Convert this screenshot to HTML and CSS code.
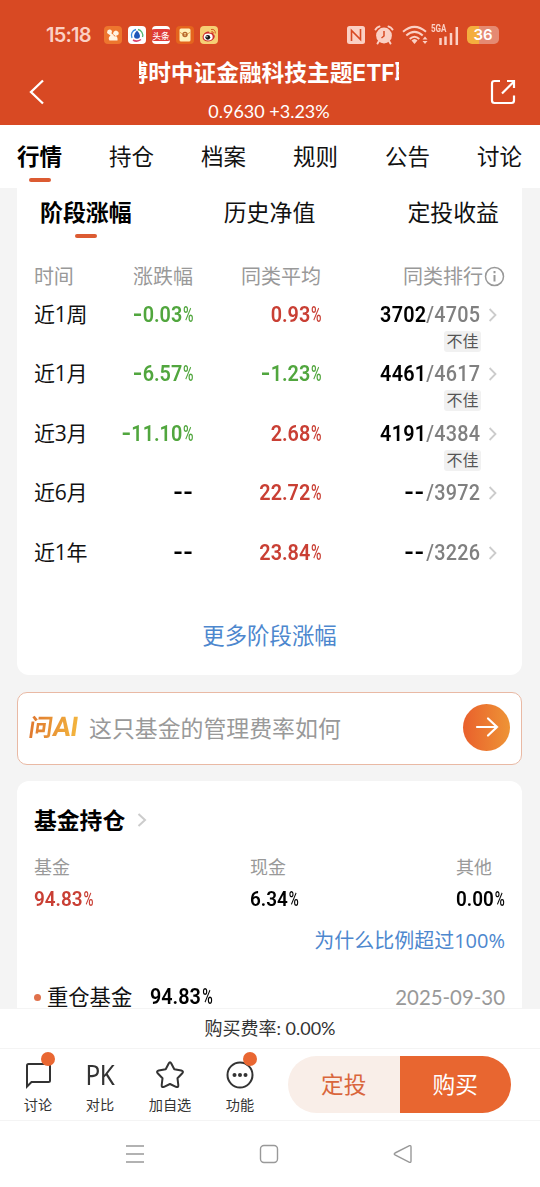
FILE: index.html
```html
<!DOCTYPE html>
<html lang="zh-CN">
<head>
<meta charset="utf-8">
<title>基金详情</title>
<link rel="stylesheet" href="styles.css">
</head>
<body>
<div class="screen">
  <header class="header">
    <div class="status">
      <span class="clock">15:18</span>
      <div class="apps">
        <svg width="18" height="18" viewBox="0 0 18 18"><rect width="18" height="18" rx="4" fill="#ed762e"/><path d="M3.500 4.500Q6 2.500 8 5l-.5 2.500L9 8.500Q9 5 12 4.500q3.500 1 2.500 4-1.500 1.500-3 1 2.500 1.500 2 5H5.500Q3.500 12 6.500 9.500L3 7z" fill="#fff3e3"/><path d="M9.500 8.500l1.500 2" stroke="#ed762e"/></svg>
        <svg width="18" height="18" viewBox="0 0 18 18"><rect width="18" height="18" rx="4" fill="#fff"/><path d="M4 12A6 6 0 0 1 8 3.500" fill="none" stroke="#378be0" stroke-width="1.300"/><path d="M10 3.500A6 6 0 0 1 14.500 11" fill="none" stroke="#52b56d" stroke-width="1.300"/><path d="M5 14q4 2.500 8-.5" fill="none" stroke="#dc4269" stroke-width="1.500"/><path d="M9 4.500q3 3 3 5.200a3 3 0 0 1-6 0Q6 7.500 9 4.500" fill="#1e57b9"/></svg>
        <span class="toutiao">头条</span>
        <svg width="18" height="18" viewBox="0 0 18 18"><rect width="18" height="18" rx="4" fill="#e4641d"/><rect x="3.500" y="2.500" width="11" height="13" rx="1.500" fill="#fff0b9"/><path d="M3.500 6q5.500 5 11 0" fill="none" stroke="#e4aa57"/><circle cx="9" cy="8.500" r="2.700" fill="#b5652b"/><path d="M7.800 7.600h2.400M9 7.600v2.500" stroke="#ffe6a0" stroke-width=".8"/></svg>
        <svg width="18" height="18" viewBox="0 0 18 18"><rect width="18" height="18" rx="4" fill="#f6cf74"/><path d="M2.500 10.500Q4 6 8 5.500q2-.2 1.500 1.500 4-1.500 3.500 1 3 1.500 1 4.500-2 3-6.500 3-5-.5-5-5" fill="#cf302d"/><ellipse cx="8.200" cy="11" rx="4.500" ry="3.400" fill="#fff"/><circle cx="7.800" cy="11.300" r="2.400" fill="#161616"/><circle cx="7" cy="10.700" r=".7" fill="#fff"/><path d="M11 3.500q4.500-.8 4.300 4M11.500 5.500q2 0 2 2" fill="none" stroke="#d85a24"/></svg>
      </div>
      <div class="signals">
        <svg class="nfc" width="18" height="18" viewBox="0 0 18 18"><rect width="18" height="18" rx="2.500" fill="#fbd0c4"/><path d="M4.500 15V4.500L13.500 13.500V3" fill="none" stroke="#d84923" stroke-width="1.600"/></svg>
        <svg class="alarm" width="20" height="20" viewBox="0 0 20 20"><circle cx="10" cy="10.500" r="7.900" fill="#fbd0c4"/><path d="M1.500 4.500Q3 2 5.500 1.500M18.500 4.500Q17 2 14.500 1.500M5 16l-1.500 2.500M15 16l1.500 2.500" stroke="#fbd0c4" stroke-width="2" fill="none" stroke-linecap="round"/><path d="M10 6v5L7.500 13" fill="none" stroke="#d84923" stroke-width="1.500"/></svg>
        <svg class="wifi" width="27" height="20" viewBox="0 0 27 20"><g fill="none" stroke="#fbd0c4" stroke-width="2"><path d="M1 6.800Q12.500-3 24 6.800"/><path d="M4.300 10.500Q12.500 3.200 20.700 10.500"/><path d="M7.700 14Q12.500 9.500 17.300 14"/></g><path d="M9.500 15.500q3-3 6 0L12.500 19z" fill="#fbd0c4"/><path d="M20.500 14.500l2.500-3 2.500 3zM20.500 16l2.500 3 2.500-3z" fill="#fbd0c4"/></svg>
        <div class="cell"><svg width="25" height="19" viewBox="0 0 25 19"><path d="M6.500 12v7M11.500 10.500v8.500M17 7v12M22.800 1v18" stroke="#fbd0c4" stroke-width="2.500"/></svg><span class="net">5GA</span></div>
        <div class="battery"><span>36</span></div>
      </div>
    </div>
    <div class="titlebar">
      <svg class="back" width="16" height="26" viewBox="0 0 16 26"><path d="M14 1.500L2 13l12 11.500" fill="none" stroke="#fff" stroke-width="2.300"/></svg>
      <div class="heading">
        <div class="title"><span>博时中证金融科技主题ETF联接</span></div>
        <div class="quote">0.9630 +3.23%</div>
      </div>
      <svg class="share" width="26" height="26" viewBox="0 0 26 26"><path d="M10 2H4.500Q2 2 2 4.500v17Q2 24 4.500 24H21.500Q24 24 24 21.500V16.500M12 14.500L24 2.500M17 2h7v7" fill="none" stroke="#fff" stroke-width="2.200"/></svg>
    </div>
  </header>

  <nav class="tabs">
    <span class="active">行情</span><span>持仓</span><span>档案</span><span>规则</span><span>公告</span><span>讨论</span>
  </nav>

  <main class="content">
    <section class="card stage">
      <div class="subtabs"><span class="active">阶段涨幅</span><span>历史净值</span><span>定投收益</span></div>
      <div class="row head">
        <span>时间</span><span>涨跌幅</span><span>同类平均</span>
        <span class="rank">同类排行<svg width="21" height="21" viewBox="0 0 21 21"><circle cx="10.500" cy="10.500" r="9" fill="none" stroke="#999" stroke-width="1.500"/><path d="M10.500 9v6.500M10.500 5v2.200" stroke="#999" stroke-width="2"/></svg></span>
      </div>
      <div class="row"><span>近1周</span><span class="num down"><i class="dash">-</i>0.03<i class="pct">%</i></span><span class="num up">0.93<i class="pct">%</i></span><span class="rank num">3702<em>/4705</em><svg class="chev" viewBox="0 0 10 14"><path d="M1.500 1l6.500 6-6.500 6"/></svg></span><span class="badge">不佳</span></div>
      <div class="row"><span>近1月</span><span class="num down"><i class="dash">-</i>6.57<i class="pct">%</i></span><span class="num down"><i class="dash">-</i>1.23<i class="pct">%</i></span><span class="rank num">4461<em>/4617</em><svg class="chev" viewBox="0 0 10 14"><path d="M1.500 1l6.500 6-6.500 6"/></svg></span><span class="badge">不佳</span></div>
      <div class="row"><span>近3月</span><span class="num down"><i class="dash">-</i>11.10<i class="pct">%</i></span><span class="num up">2.68<i class="pct">%</i></span><span class="rank num">4191<em>/4384</em><svg class="chev" viewBox="0 0 10 14"><path d="M1.500 1l6.500 6-6.500 6"/></svg></span><span class="badge">不佳</span></div>
      <div class="row"><span>近6月</span><span class="num"><i class="dash">--</i></span><span class="num up">22.72<i class="pct">%</i></span><span class="rank num"><i class="dash">--</i><em>/3972</em><svg class="chev" viewBox="0 0 10 14"><path d="M1.500 1l6.500 6-6.500 6"/></svg></span></div>
      <div class="row"><span>近1年</span><span class="num"><i class="dash">--</i></span><span class="num up">23.84<i class="pct">%</i></span><span class="rank num"><i class="dash">--</i><em>/3226</em><svg class="chev" viewBox="0 0 10 14"><path d="M1.500 1l6.500 6-6.500 6"/></svg></span></div>
      <div class="more">更多阶段涨幅</div>
    </section>

    <section class="ask">
      <span class="ask-logo">问<i>AI</i></span>
      <span class="ask-text">这只基金的管理费率如何</span>
      <span class="go"><svg width="24" height="22" viewBox="0 0 24 22"><path d="M2 11h20M13 2.500L22 11 13 19.500" fill="none" stroke="#fff" stroke-width="2.200" stroke-linecap="round"/></svg></span>
    </section>

    <section class="card hold">
      <h2>基金持仓<svg class="chev" viewBox="0 0 10 14"><path d="M1.500 1l6.500 6-6.500 6"/></svg></h2>
      <div class="alloc">
        <div><span>基金</span><b class="num up">94.83<i class="pct">%</i></b></div>
        <div><span>现金</span><b class="num">6.34<i class="pct">%</i></b></div>
        <div><span>其他</span><b class="num">0.00<i class="pct">%</i></b></div>
      </div>
      <div class="why">为什么比例超过100%</div>
      <div class="heavy"><i class="dot"></i><span>重仓基金</span><b class="num">94.83<i class="pct">%</i></b><time>2025-09-30</time></div>
    </section>
  </main>

  <div class="fee">购买费率: 0.00%</div>
  <footer class="toolbar">
    <div class="tool t1"><div class="icon"><svg width="28" height="28" viewBox="0 0 28 28"><path d="M3 25.500V4.500Q3 3 4.500 3H24.500Q26 3 26 4.500V19.500Q26 21 24.500 21H7.500z" fill="none" stroke="#333" stroke-width="2"/></svg><i class="alert"></i></div><span>讨论</span></div>
    <div class="tool t2"><div class="icon pk">PK</div><span>对比</span></div>
    <div class="tool t3"><div class="icon"><svg width="30" height="28" viewBox="0 0 30 28"><path d="M13.700 2.500Q15 0 16.300 2.500L19.300 8.300 26.300 9.500Q29 10.300 27.300 12.300L22.500 17.300 23.300 24Q23.500 26.800 21 25.800L15 23 9 25.800Q6.500 26.800 6.700 24L7.500 17.300 2.700 12.300Q1 10.300 3.700 9.500L10.700 8.300z" fill="none" stroke="#333" stroke-width="2" stroke-linejoin="round"/></svg></div><span>加自选</span></div>
    <div class="tool t4"><div class="icon"><svg width="28" height="28" viewBox="0 0 28 28"><circle cx="14" cy="14" r="12.500" fill="none" stroke="#333" stroke-width="2"/><circle cx="8.500" cy="14" r="2" fill="#333"/><circle cx="14" cy="14" r="2" fill="#333"/><circle cx="19.500" cy="14" r="2" fill="#333"/></svg><i class="alert"></i></div><span>功能</span></div>
    <div class="actions"><span class="plan">定投</span><span class="buy">购买</span></div>
  </footer>
  <div class="sysnav">
    <svg width="20" height="20" viewBox="0 0 20 20"><path d="M1 2h18M1 10h18M1 18h18" stroke="#999" stroke-width="1.400"/></svg>
    <svg width="20" height="20" viewBox="0 0 20 20"><rect x="1.500" y="1.500" width="17" height="17" rx="3.500" fill="none" stroke="#999" stroke-width="1.400"/></svg>
    <svg width="20" height="20" viewBox="0 0 20 20"><path d="M2 9L16.500 1.700Q18 1.200 18 3v14q0 1.800-1.500 1.300L2 11Q.5 10 2 9z" fill="none" stroke="#999" stroke-width="1.400"/></svg>
  </div>
</div>
</body>
</html>
```
FILE: styles.css
```css
* { box-sizing: border-box; }
body { margin: 0; font-family: Lato, "Noto Sans CJK SC", sans-serif; color: #111; background: #fff; }
i, em { font-style: normal; }
svg { display: block; flex: none; }
.screen { width: 540px; height: 1187px; display: flex; flex-direction: column; overflow: hidden; }
.header { height: 125px; flex: none; background: #d84923; color: #fff; }
.status { height: 58px; padding: 12px 41px 0 46px; display: flex; align-items: center; color: #fbd0c4; }
.clock { width: 58px; font: 600 20px/24px Inter, sans-serif; letter-spacing: -.8px; }
.apps { display: flex; gap: 6px; }
.toutiao { width: 18px; height: 18px; border-radius: 4px; border: solid #fff; border-width: 3px 0; background: #df3b38; color: #fff; font: 500 8.500px/12px "Noto Sans CJK SC", sans-serif; text-align: center; white-space: nowrap; }
.signals { margin-left: auto; display: flex; align-items: center; }
.nfc { margin-right: 9px; }
.wifi { margin-left: 8px; }
.cell { position: relative; margin-left: 5px; }
.net { position: absolute; left: -3px; top: -2px; font: 700 10px/10px Roboto, sans-serif; transform: scaleX(.8); transform-origin: left; }
.battery { margin-left: 8px; width: 32px; height: 18px; border-radius: 5px; background: linear-gradient(90deg, #f4ae3e 12px, #e58a72 12px); color: #fff; font: 600 15px/18px Inter, sans-serif; text-align: center; }
.titlebar { display: flex; align-items: flex-start; padding: 0 24px 0 29px; }
.back { margin-top: 21px; }
.heading { width: 260px; margin-left: 94px; }
.title { overflow: hidden; white-space: nowrap; height: 29px; line-height: 29px; font-family: Inter, "Noto Sans CJK SC", sans-serif; font-weight: 700; font-size: 22.700px; }
.title span { display: block; margin-left: -13.500px; }
.quote { font-size: 18px; line-height: 22px; margin-top: 13px; text-align: center; }
.share { margin: 21px 0 0 auto; }

.tabs { height: 63px; flex: none; padding: 0 18px 0 17px; display: flex; justify-content: space-between; font-size: 22.500px; line-height: 63px; background: #fff; }
.active { font-weight: 700; color: #000; position: relative; }
.active::after { content: ""; position: absolute; left: 50%; bottom: 6px; width: 22px; height: 4px; margin-left: -11px; border-radius: 2px; background: #dc5b32; }
.content { height: 820px; flex: none; overflow: hidden; padding: 0 18px 0 17px; background: #f4f4f4; }
.card { background: #fff; border-radius: 12px; }
.stage { height: 487px; border-radius: 0 0 12px 12px; }
.subtabs { height: 71px; padding: 0 23px; display: flex; justify-content: space-between; font-size: 22.900px; line-height: 49px; }
.subtabs .active { height: 56px; }
.row { display: grid; grid-template: 30px 29.400px / 78px 81px 128px 1fr; padding: 0 18px 0 17px; font-size: 21px; line-height: 28px; text-align: right; white-space: nowrap; }
.row > :first-child { text-align: left; letter-spacing: -.2px; font-family: "Open Sans", "Noto Sans CJK SC", sans-serif; }
.head { grid-template-rows: 41px; font-size: 20px; line-height: 35px; color: #999; }
.rank { display: flex; justify-content: flex-end; align-items: center; }
.head .rank { height: 35px; line-height: 35px; }
.head .rank svg { margin: 0 -1px 0 1px; }
.row > .rank.num { height: 30px; letter-spacing: .25px; }
.num { font-family: Roboto, sans-serif; font-weight: 600; font-size: 22px; color: #000; line-height: 30px; transform: scaleX(.9); transform-origin: right; white-space: nowrap; }
.num.up { color: #c93f34; }
.num.down { color: #51a63e; }
.num em { color: #808080; font-weight: 500; }
.pct { display: inline-block; width: 11px; margin-left: 1px; text-align: left; font-weight: 500; transform: scaleX(.72); transform-origin: left; }
.dash { font-family: Inter, sans-serif; font-size: 24px; line-height: 1px; }
.rank .dash { margin: 0 2px 3px 0; }
.chev { display: inline-block; width: 10px; height: 14px; margin: 0 6px 0 8px; fill: none; stroke: #ccc; stroke-width: 2; }
.rank .chev { width: 11px; margin: 0 7px 0 8.500px; }
.badge { grid-column: 4; justify-self: end; margin: 1px 23px 0 0; width: 37px; height: 21px; border-radius: 3px; background: #f1f1f1; color: #555; font-size: 16px; line-height: 20px; text-align: center; }
.more { text-align: center; color: #4d87ce; font-size: 22.400px; line-height: 34px; margin-top: 22px; }

.ask { height: 73px; margin-top: 17px; border: 1px solid #e9b9a4; border-radius: 10px; background: #fff; display: flex; align-items: center; padding: 0 11px 3px; white-space: nowrap; }
.ask-logo { width: 60px; font: 700 24px/30px Roboto, "Noto Sans CJK SC", sans-serif; transform: skewX(-8deg); background: linear-gradient(90deg, #df772e, #f3b53e 49px); background-clip: text; color: transparent; }
.ask-logo i { font-size: 27px; letter-spacing: -.7px; }
.ask-text { color: #999; font-size: 22.900px; }
.go { margin-left: auto; width: 47px; height: 47px; border-radius: 50%; background: linear-gradient(90deg, #e9602c, #ee9436); display: grid; place-items: center; }

.hold { height: 300px; margin-top: 16px; padding: 20px 17px 0; }
h2 { margin: 0; font-size: 22.800px; line-height: 38px; display: flex; align-items: center; color: #000; }
h2 .chev { margin-left: 12px; }
.alloc { display: flex; margin-top: 15px; }
.alloc div { width: 216px; display: flex; flex-direction: column; }
.alloc div:nth-child(2) { width: 206px; }
.alloc div:last-child { width: 48px; }
.alloc span { color: #999; font-size: 18px; line-height: 26px; }
.alloc .num { margin-top: 4px; }
.alloc .num, .heavy .num { font-size: 21px; transform: scaleX(.9); transform-origin: left; }
.why { text-align: right; color: #4d87ce; font-family: "Open Sans", "Noto Sans CJK SC", sans-serif; font-size: 20px; line-height: 28px; margin-top: 13px; }
.heavy { display: flex; align-items: center; margin-top: 27px; height: 30px; font-size: 21.300px; line-height: 30px; white-space: nowrap; }
.dot { width: 7px; height: 7px; border-radius: 50%; background: #e0714b; margin-right: 6px; }
.heavy .num { margin-left: 18px; font-size: 22px; line-height: 32px; }
.heavy time { margin-left: auto; color: #999; font-size: 20.400px; }

.fee { height: 40px; flex: none; border-top: 1px solid #f4f4f4; background: #fff; text-align: center; font-size: 18px; line-height: 38px; color: #333; white-space: nowrap; }
.toolbar { height: 73px; flex: none; border: solid #f4f4f4; border-width: 1px 0; display: flex; padding-left: 3px; background: #fff; }
.tool { width: 70px; display: flex; flex-direction: column; align-items: center; font-size: 14.200px; line-height: 22px; color: #333; padding-top: 12px; }
.t2 { width: 54px; }
.t3 { width: 86px; }
.t4 { width: 54px; }
.icon { height: 33px; display: flex; align-items: flex-start; position: relative; }
.pk { font: 400 27px/28px "Noto Sans", sans-serif; letter-spacing: -.5px; transform: scaleX(.9); }
.alert { position: absolute; right: -3px; top: -9px; width: 14px; height: 14px; border-radius: 50%; background: #e96732; }
.actions { margin: 7px 0 0 21px; width: 223px; height: 57px; display: flex; border-radius: 29px; overflow: hidden; font-size: 22.700px; line-height: 57px; text-align: center; }
.actions span { flex: 1; }
.plan { background: #f9eee8; color: #d9663c; }
.buy { background: #e86630; color: #fff; }
.sysnav { height: 66px; flex: none; background: #fff; display: flex; justify-content: center; align-items: center; gap: 114px; padding-right: 3px; }
```
